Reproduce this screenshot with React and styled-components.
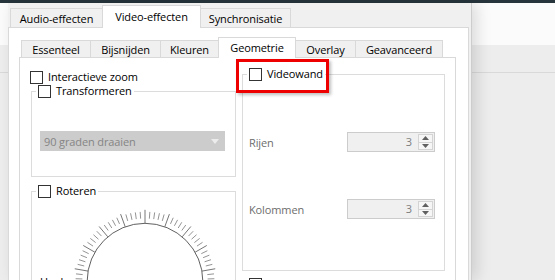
import React from 'react';
import styled, { createGlobalStyle } from 'styled-components';

const GlobalStyle = createGlobalStyle`
  html, body {
    margin: 0;
    width: 555px;
    height: 280px;
    overflow: hidden;
  }
  body {
    font-family: "Open Sans", "Noto Sans", sans-serif;
    font-size: 11px;
    letter-spacing: -0.12px;
    color: #000;
  }
`;

const Page = styled.div`
  display: flex;
  width: 555px;
  height: 280px;
  overflow: hidden;
  background: linear-gradient(
    to bottom,
    #27343c 0 3px,
    #fbfbfb 3px 45px,
    #ededed 45px 72px,
    #d9d9d9 72px 73px,
    #ededed 73px
  );
`;

const Dialog = styled.div`
  display: flex;
  flex-direction: column;
  margin: 3px 0 0 8px;
  padding: 2px 2px 0 0;
  width: 464px;
  height: 277px;
  box-sizing: border-box;
  background: #f0f0f0;
  border-right: 1px solid #cdcdcd;
  box-shadow: 5px 0 14px rgba(0, 0, 0, 0.13);
`;

const TabBar = styled.div`
  display: flex;
  align-items: flex-end;
  height: ${p => p.$height}px;
  margin-left: 2px;
  flex-shrink: 0;
`;

const Tab = styled.div`
  position: relative;
  display: flex;
  align-items: center;
  justify-content: center;
  box-sizing: border-box;
  width: ${p => p.$w}px;
  height: ${p => (p.$active ? p.$tall + 1 : p.$tall - 3)}px;
  margin-bottom: ${p => (p.$active ? '-1px' : '0')};
  padding-bottom: ${p => (p.$active ? '1px' : '0')};
  border: 1px solid #d9d9d9;
  border-bottom: none;
  background: ${p => (p.$active ? '#fff' : '#f0f0f0')};
  z-index: ${p => (p.$active ? 1 : 0)};
  white-space: nowrap;

  & + & {
    margin-left: -1px;
  }
`;

const OuterPane = styled.div`
  flex: 1;
  display: flex;
  flex-direction: column;
  padding: 9px 12px 0 10px;
  background: #fff;
  border: 1px solid #d9d9d9;
  border-bottom: none;
`;

const InnerPane = styled.div`
  flex: 1;
  display: grid;
  grid-template-columns: 206px 203px;
  column-gap: 6px;
  align-content: start;
  padding: 9px 10px 0 10px;
  background: #fff;
  border: 1px solid #d9d9d9;
  border-bottom: none;
`;

const Column = styled.div`
  display: flex;
  flex-direction: column;
`;

const Box = styled.span`
  display: inline-block;
  width: 13px;
  height: 13px;
  box-sizing: border-box;
  border: 1px solid #333;
  background: #fff;
  flex-shrink: 0;
`;

const CheckRow = styled.label`
  display: flex;
  align-items: center;
  gap: 5px;
  height: 14px;
  line-height: 14px;
  margin: ${p => p.$margin || '0'};
  white-space: nowrap;
`;

const Group = styled.fieldset`
  position: relative;
  margin: ${p => p.$margin || '0'};
  padding: ${p => p.$padding || '0 10px 25px 4px'};
  border: 1px solid #dcdcdc;
  min-width: 0;
`;

const Legend = styled.legend`
  position: relative;
  display: flex;
  align-items: center;
  gap: 5px;
  height: 14px;
  line-height: 14px;
  padding: 0 2px;
  white-space: nowrap;
`;

const Highlight = styled.span`
  position: absolute;
  left: -11px;
  top: -8px;
  width: 93px;
  height: 34px;
  box-sizing: border-box;
  border: 3px solid #ee0000;
  box-shadow: 2px 2px 3px rgba(0, 0, 0, 0.25);
  pointer-events: none;
`;

const Combo = styled.div`
  display: flex;
  align-items: center;
  justify-content: space-between;
  box-sizing: border-box;
  height: 20px;
  margin: 33px 0 0 4px;
  padding: 0 5px 0 3px;
  background: #cccccc;
  border: 1px solid #cccccc;
  color: #858585;
`;

const DialRow = styled.div`
  display: flex;
  margin-top: 7px;
`;

const AngleLabel = styled.span`
  width: 25px;
  margin: 70px 0 0 4px;
  line-height: 14px;
`;

const WallBody = styled.div`
  display: flex;
  flex-direction: column;
  gap: 47px;
`;

const SpinRow = styled.div`
  display: grid;
  grid-template-columns: 1fr 88px;
  align-items: center;
  margin-left: 2px;
  color: #6d6d6d;
`;

const SpinBox = styled.div`
  display: flex;
  box-sizing: border-box;
  height: 20px;
  background: #f0f0f0;
  border: 1px solid #cccccc;
`;

const SpinValue = styled.span`
  flex: 1;
  text-align: right;
  padding-right: 5px;
  line-height: 18px;
  color: #7d7d7d;
`;

const SpinButtons = styled.div`
  display: flex;
  flex-direction: column;
  width: 15px;
  margin: 1px;
  box-sizing: border-box;
  border: 1px solid #d4d4d4;
  background: #f6f6f6;
`;

const SpinHalf = styled.span`
  flex: 1;
  display: flex;
  align-items: center;
  justify-content: center;
  & + & {
    border-top: 1px solid #d4d4d4;
  }
`;

function Arrow({ up }) {
  return (
    <svg width="7" height="4" viewBox="0 0 7 4">
      <path d={up ? 'M0 4 L3.5 0 L7 4 Z' : 'M0 0 L3.5 4 L7 0 Z'} fill="#606060" />
    </svg>
  );
}

function Spinner({ label, value }) {
  return (
    <SpinRow>
      <span>{label}</span>
      <SpinBox>
        <SpinValue>{value}</SpinValue>
        <SpinButtons>
          <SpinHalf>
            <Arrow up />
          </SpinHalf>
          <SpinHalf>
            <Arrow />
          </SpinHalf>
        </SpinButtons>
      </SpinBox>
    </SpinRow>
  );
}

// rotation dial: ticks every 4 degrees, a longer one every 20
function Dial() {
  const cx = 83;
  const cy = 76;
  const ticks = [];
  for (let i = 0; i < 90; i += 1) {
    const a = (i * 4 * Math.PI) / 180;
    const major = i % 5 === 0;
    const r1 = major ? 60 : 65;
    const r2 = major ? 74 : 72;
    ticks.push(
      <line
        key={i}
        x1={cx + r1 * Math.sin(a)}
        y1={cy - r1 * Math.cos(a)}
        x2={cx + r2 * Math.sin(a)}
        y2={cy - r2 * Math.cos(a)}
        stroke={major ? '#707070' : '#909090'}
        strokeWidth="1"
      />
    );
  }
  return (
    <svg width="166" height="160" viewBox="0 0 166 160">
      {ticks}
      <circle cx={cx} cy={cy} r="60" fill="#fff" stroke="#5a5a5a" strokeWidth="1" />
    </svg>
  );
}

const outerTabs = [
  { label: 'Audio-effecten', w: 93 },
  { label: 'Video-effecten', w: 99, active: true },
  { label: 'Synchronisatie', w: 91 },
];

const innerTabs = [
  { label: 'Essenteel', w: 70 },
  { label: 'Bijsnijden', w: 71 },
  { label: 'Kleuren', w: 59 },
  { label: 'Geometrie', w: 78, active: true },
  { label: 'Overlay', w: 61 },
  { label: 'Geavanceerd', w: 88 },
];

export default function App() {
  return (
    <Page>
      <GlobalStyle />
      <Dialog>
        <TabBar $height={22}>
          {outerTabs.map(t => (
            <Tab key={t.label} $w={t.w} $tall={22} $active={t.active}>
              {t.label}
            </Tab>
          ))}
        </TabBar>
        <OuterPane>
          <TabBar $height={20}>
            {innerTabs.map(t => (
              <Tab key={t.label} $w={t.w} $tall={20} $active={t.active}>
                {t.label}
              </Tab>
            ))}
          </TabBar>
          <InnerPane>
            <Column>
              <CheckRow $margin="3px 0 0 0">
                <Box />
                Interactieve zoom
              </CheckRow>
              <Group $margin="0 0 0 1px">
                <Legend>
                  <Box />
                  Transformeren
                </Legend>
                <Combo>
                  <span>90 graden draaien</span>
                  <svg width="8" height="5" viewBox="0 0 8 5">
                    <path d="M0 0 L8 0 L4 5 Z" fill="#ececec" />
                  </svg>
                </Combo>
              </Group>
              <Group $margin="7px 0 0 1px" $padding="0 10px 0 4px">
                <Legend>
                  <Box />
                  Roteren
                </Legend>
                <DialRow>
                  <AngleLabel>Hoek</AngleLabel>
                  <Dial />
                </DialRow>
              </Group>
            </Column>
            <Column>
              <Group $padding="51px 9px 51px 4px">
                <Legend>
                  <Box />
                  Videowand
                  <Highlight />
                </Legend>
                <WallBody>
                  <Spinner label="Rijen" value="3" />
                  <Spinner label="Kolommen" value="3" />
                </WallBody>
              </Group>
              <CheckRow $margin="6px 0 0 7px">
                <Box />
                Puzzelspel
              </CheckRow>
            </Column>
          </InnerPane>
        </OuterPane>
      </Dialog>
    </Page>
  );
}
